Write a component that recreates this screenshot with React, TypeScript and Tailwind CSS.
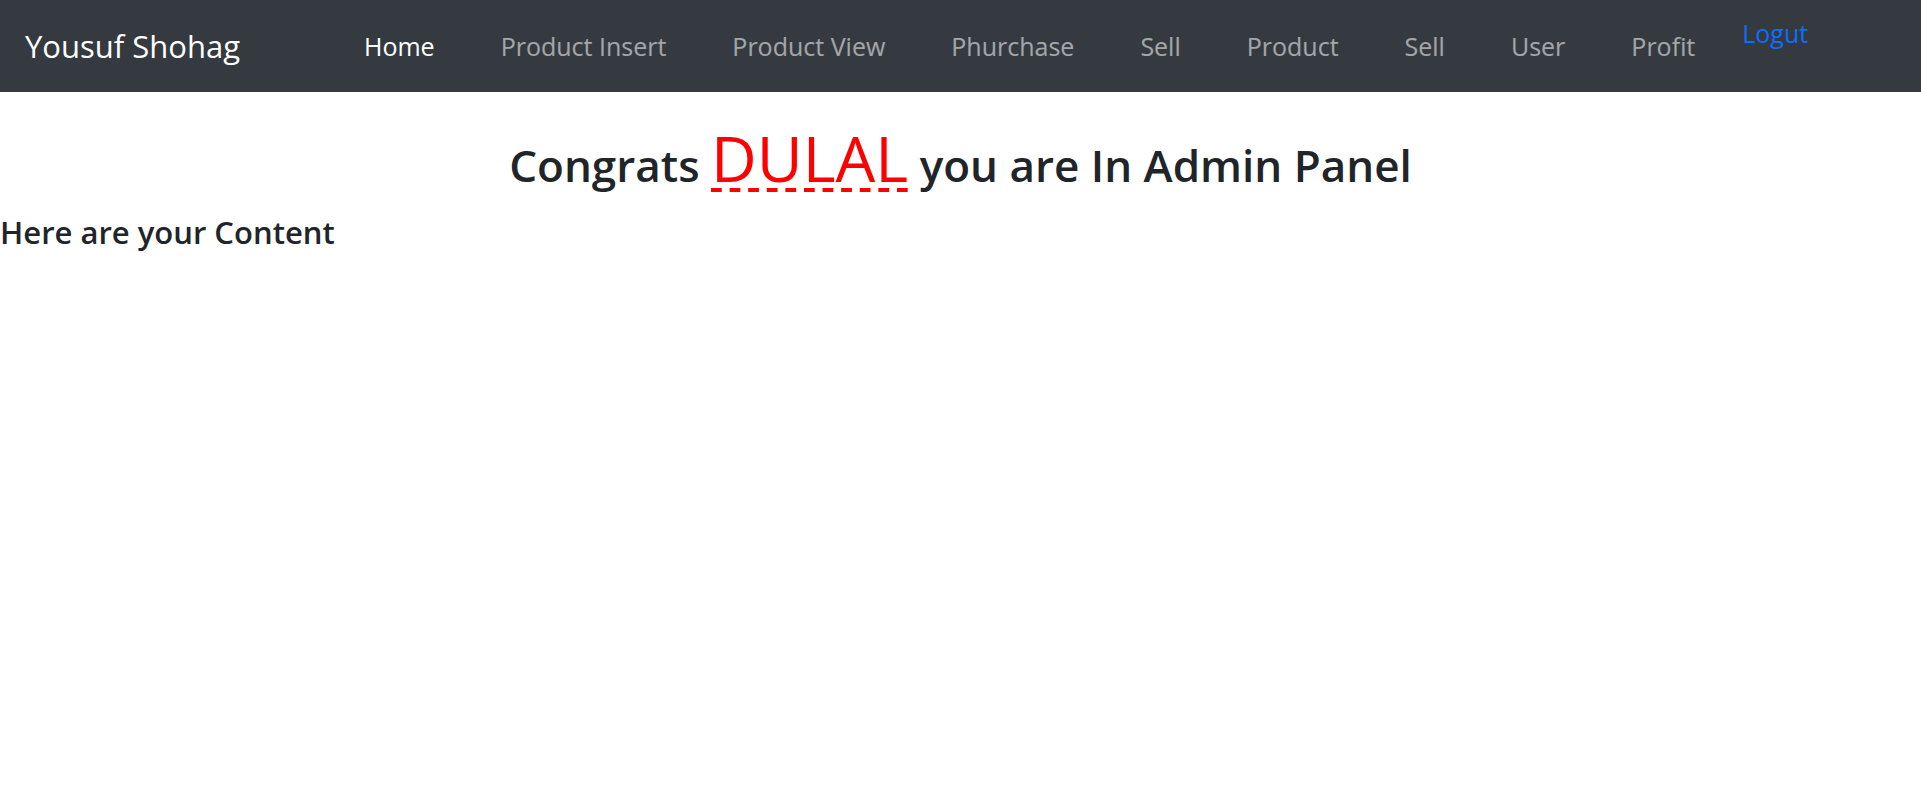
const navLinks = [
  { label: "Home", active: true },
  { label: "Product Insert" },
  { label: "Product View" },
  { label: "Phurchase" },
  { label: "Sell" },
  { label: "Product" },
  { label: "Sell" },
  { label: "User" },
  { label: "Profit" },
];

function Navbar() {
  return (
    <nav className="flex h-[92px] w-full items-center bg-[#343a40] pl-[25px]">
      <a href="#" className="text-[31px] leading-[1.5] text-white">
        Yousuf Shohag
      </a>
      <ul className="ml-[91px] mt-[2px] flex items-center">
        {navLinks.map((link, i) => (
          <li key={`${link.label}-${i}`}>
            <a
              href="#"
              className={
                link.active
                  ? "block px-[33px] text-[25px] leading-[1.5] text-white"
                  : "block px-[33px] text-[25px] leading-[1.5] text-white/55"
              }
            >
              {link.label}
            </a>
          </li>
        ))}
      </ul>
      <a
        href="#"
        className="mb-[24px] ml-[14px] text-[25px] leading-[1.5] text-[#0d6efd]"
      >
        Logut
      </a>
    </nav>
  );
}

export default function App() {
  return (
    <div className="min-h-screen bg-white font-['Open_Sans',sans-serif] text-[#212529]">
      <Navbar />
      <h1 className="mt-[34px] text-center text-[44px] font-semibold leading-[1.2]">
        Congrats{" "}
        <span className="inline-block bg-[linear-gradient(to_right,#ff0000_58%,transparent_0)] bg-[length:18.6px_4px] bg-bottom-left bg-repeat-x pb-[3px] text-[63px] font-normal leading-none text-[#ff0000]">
          DULAL
        </span>{" "}
        you are In Admin Panel
      </h1>
      <h3 className="mt-[22px] text-[31px] font-semibold leading-[1.2]">
        Here are your Content
      </h3>
    </div>
  );
}
